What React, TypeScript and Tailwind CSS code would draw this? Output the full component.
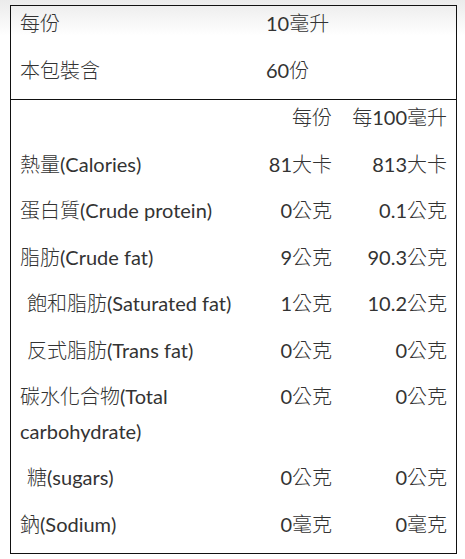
const font = {
  fontFamily: '"Lato", "Noto Sans CJK TC", "Noto Sans CJK SC", sans-serif',
};

const top = [
  ["每份", "10毫升"],
  ["本包裝含", "60份"],
];

const rows: [string, string, string, boolean][] = [
  ["熱量(Calories)", "81大卡", "813大卡", false],
  ["蛋白質(Crude protein)", "0公克", "0.1公克", false],
  ["脂肪(Crude fat)", "9公克", "90.3公克", false],
  ["飽和脂肪(Saturated fat)", "1公克", "10.2公克", true],
  ["反式脂肪(Trans fat)", "0公克", "0公克", true],
  ["碳水化合物(Total carbohydrate)", "0公克", "0公克", false],
  ["糖(sugars)", "0公克", "0公克", true],
  ["鈉(Sodium)", "0毫克", "0毫克", false],
];

// CJK glyphs in the shot are a lighter face than the latin ones
function T({ s }: { s: string }) {
  const parts = s.split(/([\u4e00-\u9fff]+)/).filter(Boolean);
  return (
    <>
      {parts.map((p, i) =>
        /[\u4e00-\u9fff]/.test(p) ? (
          <span key={i} className="font-light">{p}</span>
        ) : (
          <span key={i}>{p}</span>
        )
      )}
    </>
  );
}

export default function App() {
  return (
    <div
      className="w-[465px] h-[559px] overflow-hidden bg-[linear-gradient(#ebebeb,#ffffff_36px)] pt-[5px] pl-[10px]"
      style={font}
    >
      <div className="w-[447px] border-[1.5px] border-[#111] text-[20px] leading-[34.5px] text-[#333]">
        {/* serving info */}
        <div className="grid grid-cols-[245px_1fr] border-b-[1.5px] border-[#111]">
          {top.map(([a, b]) => (
            <div key={a} className="contents">
              <div className="pl-[9px] pb-[12px]"><T s={a} /></div>
              <div className="pl-[10px] pb-[12px]"><T s={b} /></div>
            </div>
          ))}
        </div>

        {/* nutrients */}
        <div className="grid grid-cols-[231px_100px_1fr]">
          <div className="pb-[12px]"></div>
          <div className="pr-[10px] pb-[12px] text-right"><T s="每份" /></div>
          <div className="pr-[9px] pb-[12px] text-right"><T s="每100毫升" /></div>
          {rows.map(([label, per, per100, indent]) => (
            <div key={label} className="contents">
              <div className={indent ? "pl-[16px] pb-[12px]" : "pl-[9px] pb-[12px]"}><T s={label} /></div>
              <div className="pr-[10px] pb-[12px] text-right"><T s={per} /></div>
              <div className="pr-[9px] pb-[12px] text-right"><T s={per100} /></div>
            </div>
          ))}
        </div>
      </div>
    </div>
  );
}
